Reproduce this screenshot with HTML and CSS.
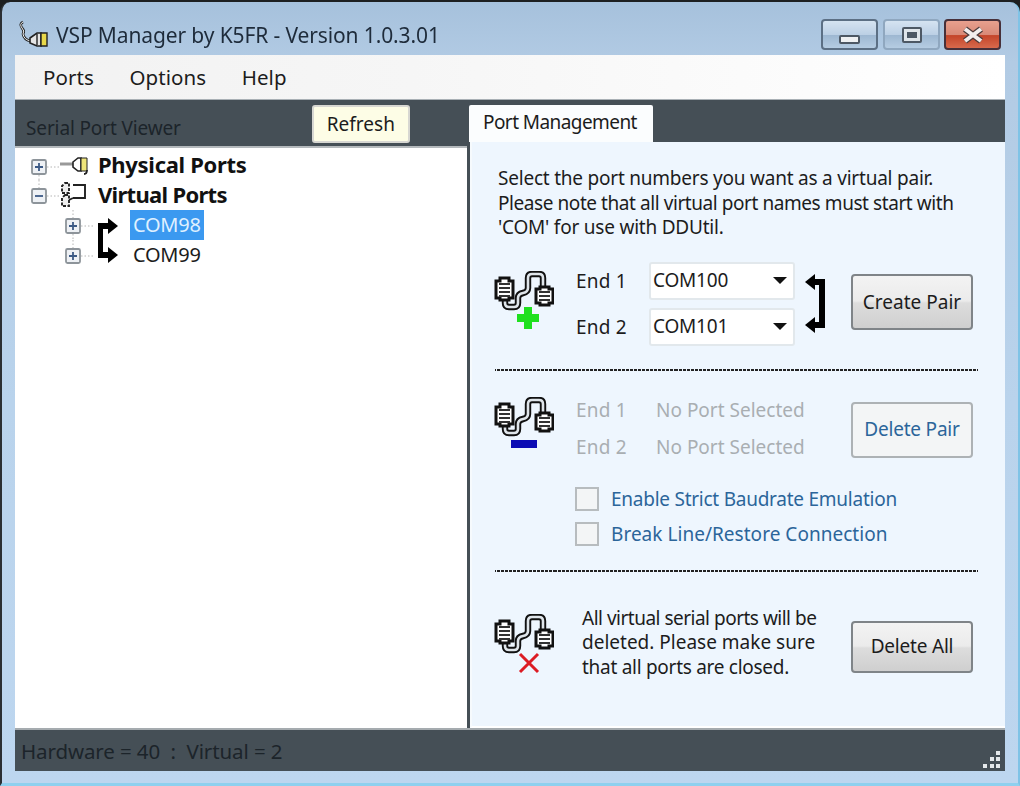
FILE: index.html
```html
<!DOCTYPE html>
<html lang="en">
<head>
<meta charset="utf-8">
<title>VSP Manager by K5FR</title>
<link rel="stylesheet" href="styles.css">
</head>
<body>
<svg class="defs" width="0" height="0" aria-hidden="true">
  <symbol id="ports" viewBox="0 0 60 60">
    <path d="M11 28 V32 Q11 36 15 36 H20 Q24 36 24 32 V27 Q24 23 29 22 Q34 21 34 17 V7 Q34 3 38 3 H45 Q49 3 49 7 V15" fill="none" stroke="#111" stroke-width="6.4"/>
    <path d="M11 28 V32 Q11 36 15 36 H20 Q24 36 24 32 V27 Q24 23 29 22 Q34 21 34 17 V7 Q34 3 38 3 H45 Q49 3 49 7 V15" fill="none" stroke="#dfe5ea" stroke-width="2.6"/>
    <path d="M2 10 H6 V7 H15 V10 H19 V27 H15 V29 H6 V27 H2 Z" fill="#fff" stroke="#111" stroke-width="3"/>
    <path d="M5 13 H16 M5 17 H16 M5 21 H16 M5 25 H16" stroke="#333" stroke-width="2.2"/>
    <path d="M42 18 H46 V16 H55 V18 H59 V32 H55 V34 H46 V32 H42 Z" fill="#fff" stroke="#111" stroke-width="3"/>
    <path d="M45 21 H56 M45 25 H56 M45 29 H56" stroke="#333" stroke-width="2.2"/>
  </symbol>
</svg>
<div class="window">
  <header class="titlebar">
    <svg class="app-icon" width="32" height="32" viewBox="0 0 32 32">
      <path d="M5 3 Q1 5 4 9 Q7 12 5 15 Q6 21 13 22" fill="none" stroke="#222" stroke-width="2.6"/>
      <path d="M5 3 Q1 5 4 9 Q7 12 5 15 Q6 21 13 22" fill="none" stroke="#eee" stroke-width="1"/>
      <path d="M12 19 L19 14 H23 V27 H19 L12 24 Z" fill="#e4e4e4" stroke="#222" stroke-width="1.6"/>
      <path d="M23 14 H29 V27 H23 Z" fill="#e8d84a" stroke="#222" stroke-width="1.4"/>
      <path d="M19 15 V26" stroke="#222" stroke-width="1.4"/>
    </svg>
    <h1 class="title">VSP Manager by K5FR - Version 1.0.3.01</h1>
    <div class="caption-buttons">
      <span class="cap cap-min"><i class="glyph-min"></i></span>
      <span class="cap cap-max"><i class="glyph-max"></i></span>
      <span class="cap cap-close">
        <svg width="26" height="18" viewBox="0 0 26 18"><path d="M5 3 L21 15 M21 3 L5 15" stroke="#4a3a3a" stroke-width="6.5"/><path d="M5 3 L21 15 M21 3 L5 15" stroke="#f2eeee" stroke-width="4"/></svg>
      </span>
    </div>
  </header>

  <div class="client">
    <nav class="menubar">
      <span class="menu-item">Ports</span>
      <span class="menu-item">Options</span>
      <span class="menu-item">Help</span>
    </nav>

    <main class="panes">
      <section class="left-pane">
        <div class="viewer-head">
          <span class="viewer-title">Serial Port Viewer</span>
          <button class="refresh" type="button">Refresh</button>
        </div>
        <div class="tree">
          <div class="tree-row">
            <svg class="gutter" width="30" height="30" viewBox="0 0 30 30">
              <path d="M9 25 V30 M17 17 H30" stroke="#b5b5b5" stroke-dasharray="1.5 2" fill="none"/>
              <rect x="2" y="10" width="14" height="14" rx="1.5" fill="#eef1f5" stroke="#8d949a" stroke-width="1.8"/>
              <path d="M5 17 H13 M9 13 V21" stroke="#3c5a86" stroke-width="1.8"/>
            </svg>
            <svg class="node-icon" width="37" height="30" viewBox="0 0 37 30">
              <path d="M0 14 H13" stroke="#999" stroke-width="3"/>
              <path d="M13 12 L18 8 H21 V21 H18 L13 17 Z" fill="#fff" stroke="#222" stroke-width="1.6"/>
              <path d="M21 8 H27 V21 H21 Z" fill="#efe57a" stroke="#222" stroke-width="1"/>
              <path d="M27 20 Q27 24 24 24" stroke="#222" stroke-width="1.8" fill="none"/>
            </svg>
            <span class="node-bold">Physical Ports</span>
          </div>
          <div class="tree-row">
            <svg class="gutter" width="30" height="30" viewBox="0 0 30 30">
              <path d="M9 0 V8 M17 16 H30" stroke="#b5b5b5" stroke-dasharray="1.5 2" fill="none"/>
              <rect x="2" y="9" width="14" height="14" rx="1.5" fill="#eef1f5" stroke="#8d949a" stroke-width="1.8"/>
              <path d="M5 16 H13" stroke="#3c5a86" stroke-width="1.8"/>
            </svg>
            <svg class="node-icon" width="37" height="30" viewBox="0 0 37 30">
              <path d="M5 3 H9 V13 H2 V6 Z M5 15 H9 V26 H2 V18 Z" fill="#eee" stroke="#222" stroke-width="1.9" stroke-dasharray="3 1.5"/>
              <path d="M13 5 H25 V18 H13 M13 18 L9 20" fill="none" stroke="#222" stroke-width="1.9"/>
            </svg>
            <span class="node-bold node-virtual">Virtual Ports</span>
          </div>
          <div class="tree-children">
            <svg class="pair-arrows" width="24" height="48" viewBox="0 0 24 48">
              <path d="M22 10 L12 2 V7 H2 V42 H12 V47 L22 39 L12 31 V36 H7 V13 H12 V18 Z" fill="#000"/>
            </svg>
            <div class="tree-row child-row">
              <svg class="gutter" width="64" height="30" viewBox="0 0 64 30">
                <path d="M43 0 V8 M43 24 V30 M51 16 H64" stroke="#b5b5b5" stroke-dasharray="1.5 2" fill="none"/>
                <rect x="36" y="9" width="14" height="14" rx="1.5" fill="#eef1f5" stroke="#8d949a" stroke-width="1.8"/>
                <path d="M39 16 H47 M43 12 V20" stroke="#3c5a86" stroke-width="1.8"/>
              </svg>
              <span class="node selected">COM98</span>
            </div>
            <div class="tree-row child-row">
              <svg class="gutter" width="64" height="30" viewBox="0 0 64 30">
                <path d="M43 0 V8 M51 16 H64" stroke="#b5b5b5" stroke-dasharray="1.5 2" fill="none"/>
                <rect x="36" y="9" width="14" height="14" rx="1.5" fill="#eef1f5" stroke="#8d949a" stroke-width="1.8"/>
                <path d="M39 16 H47 M43 12 V20" stroke="#3c5a86" stroke-width="1.8"/>
              </svg>
              <span class="node">COM99</span>
            </div>
          </div>
        </div>
      </section>

      <section class="right-pane">
        <div class="tabstrip"><span class="tab">Port Management</span></div>
        <div class="tab-body">
          <p class="intro">Select the port numbers you want as a virtual pair.<br><span class="tight">Please note that all virtual port names must start with</span><br>'COM' for use with DDUtil.</p>

          <div class="section create">
            <svg class="ports-icon" width="60" height="60" viewBox="0 0 60 60">
              <use href="#ports"/>
              <path d="M34 36 V58 M23 47 H45" stroke="#1fe01f" stroke-width="8"/>
            </svg>
            <div class="end-grid">
              <span class="end-label">End 1</span>
              <div class="combo"><span>COM100</span><i class="caret"></i></div>
              <span class="end-label">End 2</span>
              <div class="combo"><span>COM101</span><i class="caret"></i></div>
            </div>
            <svg class="link-arrows" width="24" height="61" viewBox="0 0 24 61">
              <path d="M1 9 L11 1 V6 H21 V55 H11 V60 L1 52 L11 44 V49 H15 V12 H11 V17 Z" fill="#000"/>
            </svg>
            <button class="btn btn-create" type="button">Create Pair</button>
          </div>

          <hr class="rule">

          <div class="section remove">
            <svg class="ports-icon" width="60" height="60" viewBox="0 0 60 60">
              <use href="#ports"/>
              <rect x="17" y="43" width="26" height="8" fill="#0c0cb4"/>
            </svg>
            <div class="port-rows">
              <div class="port-row"><span class="end-label muted">End 1</span><span class="muted">No Port Selected</span></div>
              <div class="port-row"><span class="end-label muted">End 2</span><span class="muted">No Port Selected</span></div>
            </div>
            <button class="btn btn-disabled" type="button">Delete Pair</button>
          </div>
          <div class="checks">
            <label class="check"><i class="box"></i><span>Enable Strict Baudrate Emulation</span></label>
            <label class="check check-wide"><i class="box"></i><span>Break Line/Restore Connection</span></label>
          </div>

          <hr class="rule rule-low">

          <div class="section wipe">
            <svg class="ports-icon" width="60" height="60" viewBox="0 0 60 60">
              <use href="#ports"/>
              <path d="M26 40 L44 58 M44 40 L26 58" stroke="#dc1c24" stroke-width="3"/>
            </svg>
            <p class="wipe-text"><span class="tight">All virtual serial ports will be</span><br><span class="loose">deleted. Please make sure</span><br>that all ports are closed.</p>
            <button class="btn btn-wipe" type="button">Delete All</button>
          </div>
        </div>
      </section>
    </main>

    <footer class="statusbar">
      <span>Hardware = 40&nbsp; : &nbsp;Virtual = 2</span>
      <svg class="grip" width="22" height="22" viewBox="0 0 22 22" fill="#e4e8ea">
        <rect x="15" y="2" width="4" height="4"/><rect x="9" y="8" width="4" height="4"/><rect x="15" y="8" width="4" height="4"/>
        <rect x="2" y="15" width="4" height="4"/><rect x="9" y="15" width="4" height="4"/><rect x="15" y="15" width="4" height="4"/>
      </svg>
    </footer>
  </div>
</div>
</body>
</html>
```
FILE: styles.css
```css
* { box-sizing: border-box; }

html, body {
  margin: 0;
  height: 100%;
  background: #1d1f20;
  overflow: hidden;
}

body {
  font-family: "Noto Sans", "Open Sans", sans-serif;
  font-size: 19px;
  color: #1c1c1c;
}

.defs { display: block; height: 0; }

.window {
  width: 1020px;
  height: 784px;
  margin-top: 2px;
  display: flex;
  flex-direction: column;
  border-left: 2px solid #2b2f33;
  border-right: 2px solid #7fc3e6;
  border-bottom: 3px solid #8fd0ee;
  border-radius: 10px 10px 0 0;
  background: linear-gradient(180deg, #a6c1dc 0, #b2cbe4 60px, #b9d3ec 400px, #bdd6ef 100%);
  padding: 0 13px 12px 13px;
  filter: blur(0.45px);
}

.titlebar {
  height: 53px;
  padding-top: 12px;
  flex: none;
  display: flex;
  align-items: center;
  position: relative;
}

.app-icon { margin: 0 6px 0 3px; flex: none; }

.title {
  margin: 0;
  font-size: 21px;
  font-weight: 400;
  color: #1e2b3a;
  letter-spacing: -0.12px;
  white-space: nowrap;
}

.caption-buttons {
  margin-left: auto;
  margin-right: 4px;
  display: flex;
  gap: 4px;
  align-self: flex-start;
  margin-top: 5px;
}

.cap {
  width: 57px;
  height: 31px;
  border: 2px solid #5c6f84;
  border-radius: 4px;
  display: flex;
  align-items: center;
  justify-content: center;
  background: linear-gradient(180deg, #d5e3f1 0, #bcd0e5 50%, #9db7d1 52%, #b5cce2 100%);
}

.cap-max { border-color: #8fa7bf; margin-left: 1px; }

.cap-close {
  border-color: #47303a;
  background: linear-gradient(180deg, #e8a08e 0, #d98a78 50%, #c4452a 54%, #d8694c 100%);
}

.glyph-min {
  display: block;
  width: 21px;
  height: 9px;
  margin-top: 9px;
  background: #eef0f2;
  border: 2px solid #4d5864;
  border-radius: 2px;
}

.glyph-max {
  display: block;
  width: 20px;
  height: 16px;
  background: #dfe5ea;
  border: 2px solid #4d5864;
  border-radius: 2px;
  box-shadow: inset 0 0 0 3px #dfe5ea, inset 0 0 0 8px #4d5864;
}

.client {
  flex: 1;
  min-height: 0;
  display: flex;
  flex-direction: column;
  background: #fff;
}

.menubar {
  height: 45px;
  flex: none;
  display: flex;
  align-items: center;
  gap: 35.5px;
  padding-left: 28px;
  background: linear-gradient(90deg, #f2f2f2 0, #f6f6f6 40%, #fff 100%);
  border-bottom: 1px solid #a9b0b5;
  font-size: 20.5px;
  letter-spacing: 0.08px;
}

.panes {
  flex: 1;
  min-height: 0;
  display: flex;
}

.left-pane {
  width: 455px;
  flex: none;
  display: flex;
  flex-direction: column;
  background: #fff;
  border-right: 3px solid #454f56;
}

.viewer-head {
  height: 48px;
  flex: none;
  display: flex;
  position: relative;
  padding: 5px 0 0 11px;
  background: #454f56;
  border-bottom: 2px solid #b4b9bc;
}

.viewer-title {
  margin-top: 10px;
  font-size: 19px;
  color: #1c242a;
  letter-spacing: -0.13px;
}

.refresh {
  margin-left: 131px;
  width: 98px;
  height: 38px;
  padding: 0;
  border: 2px solid #d7d7d2;
  border-radius: 3px;
  background: #fdfde6;
  font: inherit;
  color: #1c1c1c;
}

.tree {
  flex: 1;
  padding: 2px 0 0 15px;
  background: #fff;
}

.tree-row {
  height: 30px;
  display: flex;
  align-items: center;
}

.gutter, .node-icon { flex: none; }

.node-bold {
  font-weight: 700;
  font-size: 22px;
  letter-spacing: -0.3px;
  color: #111;
  margin: -2px 0 0 1px;
}

.node-virtual { letter-spacing: -0.7px; }

.tree-children { position: relative; }

.pair-arrows {
  position: absolute;
  left: 66px;
  top: 6px;
}

.child-row .gutter { margin-right: 36px; }

.node {
  height: 30px;
  line-height: 30px;
  padding: 0 3px;
  letter-spacing: -0.25px;
  width: 74px;
  color: #1c1c1c;
  font-size: 20px;
}

.selected {
  background: #3b99f0;
  color: #dff0ff;
}

.right-pane {
  flex: 1;
  min-width: 0;
  display: flex;
  flex-direction: column;
  background: #454f56;
}

.tabstrip {
  height: 42px;
  flex: none;
  display: flex;
  align-items: flex-end;
  margin-left: -1px;
}

.tab {
  width: 184px;
  height: 37px;
  padding: 2px 0 0 14px;
  background: #fbfdfe;
  border-radius: 2px 2px 0 0;
  letter-spacing: -0.57px;
  line-height: 30px;
}

.tab-body {
  flex: 1;
  min-height: 0;
  padding: 24px 27px 0 23px;
  background: #eef6fe;
  border-bottom: 2px solid #fff;
  border-left: 2px solid #f6fafd;
}

.intro {
  margin: 0;
  padding-left: 3px;
  line-height: 24.5px;
  letter-spacing: -0.22px;
  white-space: nowrap;
}

.intro .tight { letter-spacing: -0.43px; }

.section {
  display: flex;
  align-items: flex-start;
  position: relative;
}

.create { height: 84px; margin-top: 22px; }

.ports-icon { flex: none; margin: 0 22px 0 -1px; }

.create .ports-icon { margin-top: 9px; }

.end-grid {
  display: grid;
  grid-template-columns: 73px 146px;
  row-gap: 8px;
  align-items: center;
}

.end-label { letter-spacing: 0.2px; }

.combo {
  height: 38px;
  padding: 0 6px 0 2px;
  display: flex;
  align-items: center;
  justify-content: space-between;
  background: #fff;
  border: 2px solid #e2e8ec;
  border-radius: 3px;
  letter-spacing: -0.2px;
}

.combo span { margin-top: -2px; }

.caret {
  width: 0;
  height: 0;
  border-left: 7px solid transparent;
  border-right: 7px solid transparent;
  border-top: 7px solid #111;
}

.link-arrows {
  flex: none;
  margin: 11px 0 0 9px;
}

.btn {
  flex: none;
  width: 122px;
  padding: 0 0 1px;
  border: 2px solid #7f8488;
  border-radius: 4px;
  font: inherit;
  letter-spacing: -0.2px;
  color: #1c1c1c;
  background: linear-gradient(180deg, #f3f3f3 0, #ebebeb 48%, #dddddd 52%, #cfcfcf 100%);
}

.btn-create { height: 56px; margin: 12px 0 0 23px; padding: 1px 0 0; letter-spacing: 0; }

.rule {
  height: 0;
  margin: 0;
  border: 0;
  border-top: 2px dashed #3a3a3a;
  border-image: repeating-linear-gradient(90deg, #222 0 3px, transparent 3px 4px) 2;
}

.create + .rule { margin-top: 23px; }

.remove { height: 74px; margin-top: 21px; }

.remove .ports-icon { margin-top: 5px; }

.port-rows { width: 275px; flex: none; }

.port-row {
  height: 37px;
  display: flex;
  align-items: center;
}

.port-row .end-label { width: 80px; letter-spacing: 0.2px; }

.muted { color: #a9aeb2; letter-spacing: 0; }

.btn-disabled {
  height: 56px;
  margin-top: 10px;
  border-color: #adb2b5;
  background: #f3f5f6;
  color: #2b659a;
}

.checks {
  padding: 16px 0 0 80px;
  color: #2b659a;
}

.check {
  height: 35px;
  display: flex;
  align-items: center;
  gap: 12px;
  letter-spacing: -0.25px;
}

.check-wide { letter-spacing: 0.03px; }

.box {
  width: 24px;
  height: 24px;
  flex: none;
  background: #f3f5f6;
  border: 2px solid #b7bcbf;
}

.rule-low { margin-top: 18px; }

.wipe { height: 84px; margin-top: 34px; }

.wipe .ports-icon { margin: 8px 28px 0 -1px; }

.wipe-text {
  margin: 0;
  width: 269px;
  flex: none;
  line-height: 24.5px;
  letter-spacing: -0.28px;
  white-space: nowrap;
}

.wipe-text .tight { letter-spacing: -0.5px; }

.wipe-text .loose { letter-spacing: 0; }

.btn-wipe { height: 52px; margin-top: 15px; }

.statusbar {
  height: 43px;
  flex: none;
  display: flex;
  align-items: center;
  justify-content: space-between;
  padding: 0 2px 0 6px;
  background: #454f56;
  border-top: 2px solid #a5abaf;
  color: #1c242a;
  font-size: 20.5px;
  letter-spacing: -0.1px;
}

.grip { align-self: flex-end; }
```
